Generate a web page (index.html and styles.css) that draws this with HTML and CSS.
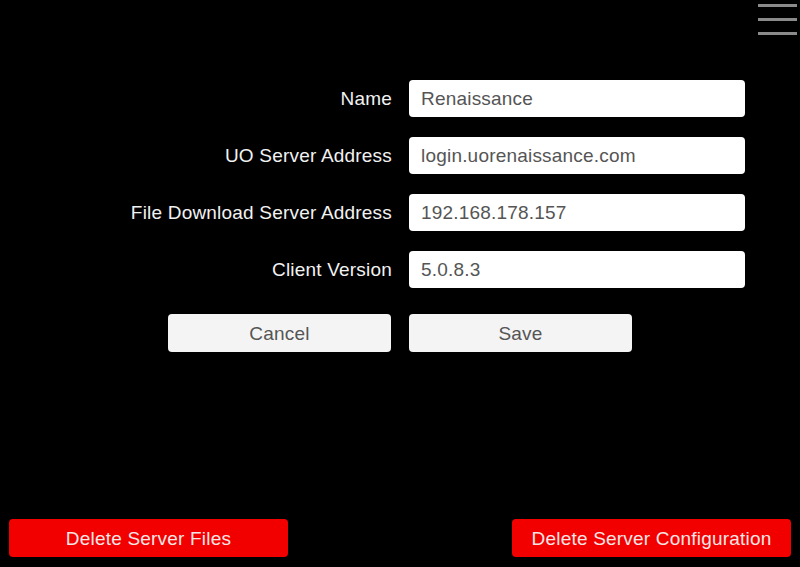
FILE: index.html
```html
<!DOCTYPE html>
<html lang="en">
<head>
    <meta charset="UTF-8">
    <meta name="viewport" content="width=device-width, initial-scale=1.0">
    <title>Server Configuration</title>
    <link rel="stylesheet" href="styles.css">
</head>
<body>
    <div class="menu-button">
        <span></span>
        <span></span>
        <span></span>
    </div>

    <div class="content">
        <div class="form">
            <label class="label">Name</label>
            <div class="field">Renaissance</div>

            <label class="label">UO Server Address</label>
            <div class="field">login.uorenaissance.com</div>

            <label class="label">File Download Server Address</label>
            <div class="field">192.168.178.157</div>

            <label class="label">Client Version</label>
            <div class="field">5.0.8.3</div>
        </div>

        <div class="actions">
            <div class="button">Cancel</div>
            <div class="button">Save</div>
        </div>
    </div>

    <div class="footer">
        <div class="danger-button">Delete Server Files</div>
        <div class="danger-button">Delete Server Configuration</div>
    </div>
</body>
</html>
```

FILE: styles.css
```css
body {
    margin: 0;
    padding: 0;
    background-color: #000;
    color: white;
    font-family: 'Liberation Sans', Arial, sans-serif;
    font-size: 19px;
    letter-spacing: 0.2px;
    height: 100vh;
    display: flex;
    flex-direction: column;
    overflow: hidden;
    position: relative;
}

.menu-button {
    position: absolute;
    top: 4px;
    right: 3px;
    width: 39px;
    display: flex;
    flex-direction: column;
    gap: 11px;
}

.menu-button span {
    display: block;
    height: 3px;
    background-color: #8a8a8a;
}

.content {
    flex: 1;
    padding-top: 80px;
}

.form {
    display: grid;
    grid-template-columns: 392px 336px;
    column-gap: 17px;
    row-gap: 20px;
}

.label {
    text-align: right;
    align-self: center;
    padding-top: 1px;
    color: #f2f2f2;
}

.field {
    height: 37px;
    line-height: 37px;
    padding-left: 12px;
    background-color: #fff;
    border-radius: 4px;
    color: #555;
}

.actions {
    display: flex;
    gap: 18px;
    margin-top: 26px;
    padding-left: 168px;
}

.button {
    width: 223px;
    height: 38px;
    line-height: 40px;
    text-align: center;
    background-color: #f4f4f4;
    border-radius: 4px;
    color: #555;
}

.footer {
    display: flex;
    justify-content: space-between;
    padding: 0 9px 10px 9px;
}

.danger-button {
    width: 279px;
    height: 38px;
    line-height: 40px;
    text-align: center;
    background-color: #f20000;
    border-radius: 4px;
    color: #f5e6e6;
}
```
